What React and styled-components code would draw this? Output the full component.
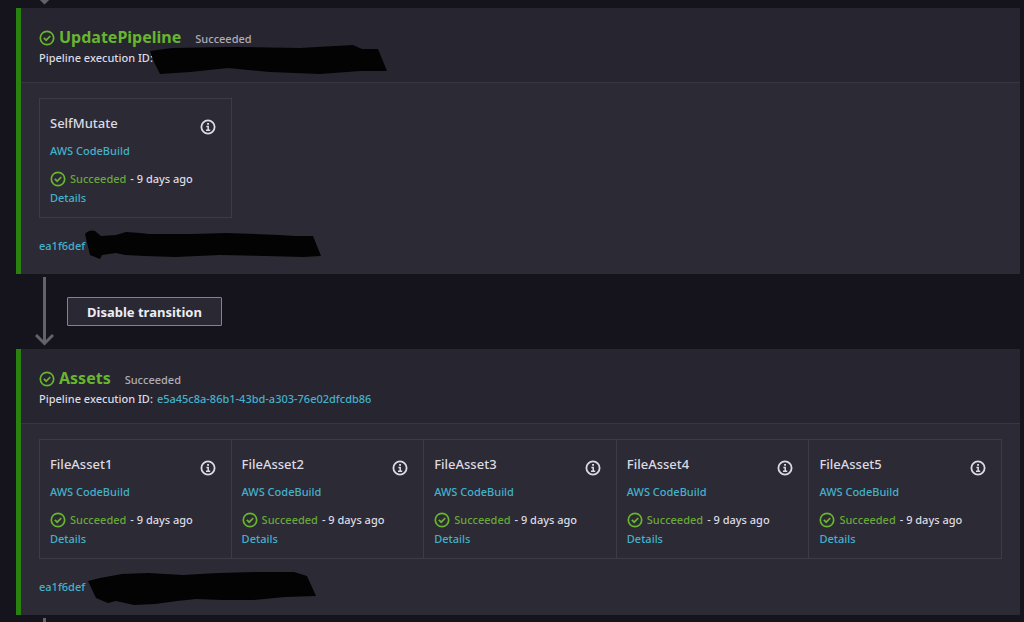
import React from "react";
import styled, { createGlobalStyle } from "styled-components";

const GlobalStyle = createGlobalStyle`
  *, *::before, *::after { box-sizing: border-box; }
  body {
    margin: 0;
    background: #15141c;
    color: #dcdbe3;
    font-family: "Noto Sans", "Open Sans", sans-serif;
    font-size: 11px;
    font-weight: 500;
    line-height: 19px;
  }
  h2, h3, p { margin: 0; }
`;

const Pipeline = styled.main`
  padding: 0 4px 0 16px;
  overflow: hidden;
`;

const Stage = styled.section`
  border-left: 5px solid #29820f;
  background: #2c2a34;
`;

const StageHeader = styled.header`
  padding: 19px 18px 15px;
  background: #27252f;
  border-bottom: 1px solid #383741;
`;

const StageTitleRow = styled.div`
  display: flex;
  align-items: center;
  gap: 4px;
  height: 21px;
  line-height: 21px;
`;

const StageTitle = styled.h2`
  color: #68b52f;
  font-size: 16px;
  font-weight: 700;
`;

const StageStatus = styled.span`
  margin-left: 10px;
  padding-top: 2px;
  color: #aeadb6;
`;

const TextLine = styled.p`
  position: relative;
  display: flex;
  gap: 4px;
  white-space: nowrap;
`;

const Link = styled.a`
  color: #44b1cb;
  text-decoration: none;
`;

const StageBody = styled.div`
  padding: 15px 18px 19px;
`;

const ActionGrid = styled.div`
  display: grid;
  grid-template-columns: repeat(5, 1fr);
  margin-bottom: 18px;
`;

const ActionCard = styled.article`
  display: flex;
  flex-direction: column;
  align-items: flex-start;
  padding: 14px 15px 10px 10px;
  border: 1px solid #3d3b46;
  & + & { border-left: 0; }
`;

const ActionHead = styled.div`
  display: flex;
  align-self: stretch;
  justify-content: space-between;
  margin-bottom: 8px;
  height: 20px;
`;

const ActionTitle = styled.h3`
  font-size: 13px;
  font-weight: 500;
  line-height: 20px;
`;

const InfoButton = styled.button`
  display: flex;
  margin-top: 6px;
  padding: 0;
  width: 16px;
  height: 16px;
  border: 0;
  background: none;
  color: #dcdbe3;
`;

const ActionStatus = styled.p`
  display: flex;
  align-items: center;
  gap: 4px;
  margin-top: 9px;
`;

const Success = styled.span`
  color: #68a838;
`;

const Scribble = styled.svg`
  position: absolute;
  left: ${(p) => p.$left}px;
  top: -8px;
  fill: #030303;
`;

const Transition = styled.div`
  display: flex;
  gap: 13px;
  height: ${(p) => p.$height}px;
  padding: 3px 0 3px 19px;
  overflow: hidden;
  align-items: ${(p) => p.$align || "center"};
`;

const ArrowIcon = styled.svg`
  flex: none;
`;

const TransitionButton = styled.button`
  padding: 0 19px;
  height: 29px;
  border: 1px solid #85848e;
  border-radius: 1px;
  background: #2a2832;
  color: #eeedf3;
  font: 700 13px/20px "Noto Sans", "Open Sans", sans-serif;
`;

function CheckIcon() {
  return (
    <svg width="16" height="16" viewBox="0 0 16 16" fill="none" stroke="#68b52f" strokeWidth="1.7" aria-hidden="true">
      <circle cx="8" cy="8" r="6.7" />
      <path d="M4.8 7.8 7.2 10.2 11.3 6" />
    </svg>
  );
}

function InfoIcon() {
  return (
    <svg width="16" height="16" viewBox="0 0 16 16" fill="none" stroke="currentColor" aria-hidden="true">
      <circle cx="8" cy="8" r="6.6" strokeWidth="1.8" />
      <path d="M6.4 7.4H8.2V11M6 11.2H10.2" strokeWidth="1.5" />
      <path d="M7.1 4.8H9" strokeWidth="1.7" />
    </svg>
  );
}

function Arrow() {
  return (
    <ArrowIcon width="19" height="69" viewBox="0 0 19 69" fill="none" stroke="#62616c" strokeWidth="3" aria-hidden="true">
      <path d="M9.5 0V66M1 58 9.5 66.500 18 58" />
    </ArrowIcon>
  );
}

const scribbles = {
  id: {
    left: 111,
    path: "M0 11 22 8 80 7 150 8 203 5 212 9 228 9 237 31 210 31 170 34 120 32 78 28 40 32 10 34 4 22Z",
  },
  commitA: {
    left: 46,
    path: "M0 6Q4 1 10 3L16 8 31 7 41 4 55 5 64 6 106 6 142 5 194 7 210 8 228 8 236 28 218 29 180 28 135 27 90 29 60 28 40 27 31 25 17 27 15 31 5 27Z",
  },
  commitB: {
    left: 49,
    path: "M0 12 12 9 34 5 60 4 77 5 95 6 130 4 170 3 206 3 219 7 228 27 197 28 165 31 135 31 108 30 89 32 67 35 46 36 28 32 20 34 8 29Z",
  },
};

function Redaction({ mark }) {
  const { left, path } = scribbles[mark];
  return (
    <Scribble $left={left} width="240" height="38" viewBox="0 0 240 38" aria-hidden="true">
      <path d={path} />
    </Scribble>
  );
}

function Action({ name }) {
  return (
    <ActionCard>
      <ActionHead>
        <ActionTitle>{name}</ActionTitle>
        <InfoButton type="button" aria-label="Action information">
          <InfoIcon />
        </InfoButton>
      </ActionHead>
      <Link href="#codebuild">AWS CodeBuild</Link>
      <ActionStatus>
        <CheckIcon />
        <Success>Succeeded</Success>
        <span>- 9 days ago</span>
      </ActionStatus>
      <Link href="#details">Details</Link>
    </ActionCard>
  );
}

function PipelineStage({ name, executionId, actions, mark }) {
  return (
    <Stage>
      <StageHeader>
        <StageTitleRow>
          <CheckIcon />
          <StageTitle>{name}</StageTitle>
          <StageStatus>Succeeded</StageStatus>
        </StageTitleRow>
        <TextLine>
          <span>Pipeline execution ID:</span>
          {executionId ? <Link href="#execution">{executionId}</Link> : <Redaction mark="id" />}
        </TextLine>
      </StageHeader>
      <StageBody>
        <ActionGrid>
          {actions.map((action) => (
            <Action key={action} name={action} />
          ))}
        </ActionGrid>
        <TextLine>
          <Link href="#commit">ea1f6def</Link>
          <Redaction mark={mark} />
        </TextLine>
      </StageBody>
    </Stage>
  );
}

export default function App() {
  return (
    <>
      <GlobalStyle />
      <Pipeline>
        <Transition $height={8} $align="flex-end">
          <Arrow />
        </Transition>
        <PipelineStage name="UpdatePipeline" actions={["SelfMutate"]} mark="commitA" />
        <Transition $height={75}>
          <Arrow />
          <TransitionButton type="button">Disable transition</TransitionButton>
        </Transition>
        <PipelineStage
          name="Assets"
          executionId="e5a45c8a-86b1-43bd-a303-76e02dfcdb86"
          actions={["FileAsset1", "FileAsset2", "FileAsset3", "FileAsset4", "FileAsset5"]}
          mark="commitB"
        />
        <Transition $height={7} $align="flex-start">
          <Arrow />
        </Transition>
      </Pipeline>
    </>
  );
}
